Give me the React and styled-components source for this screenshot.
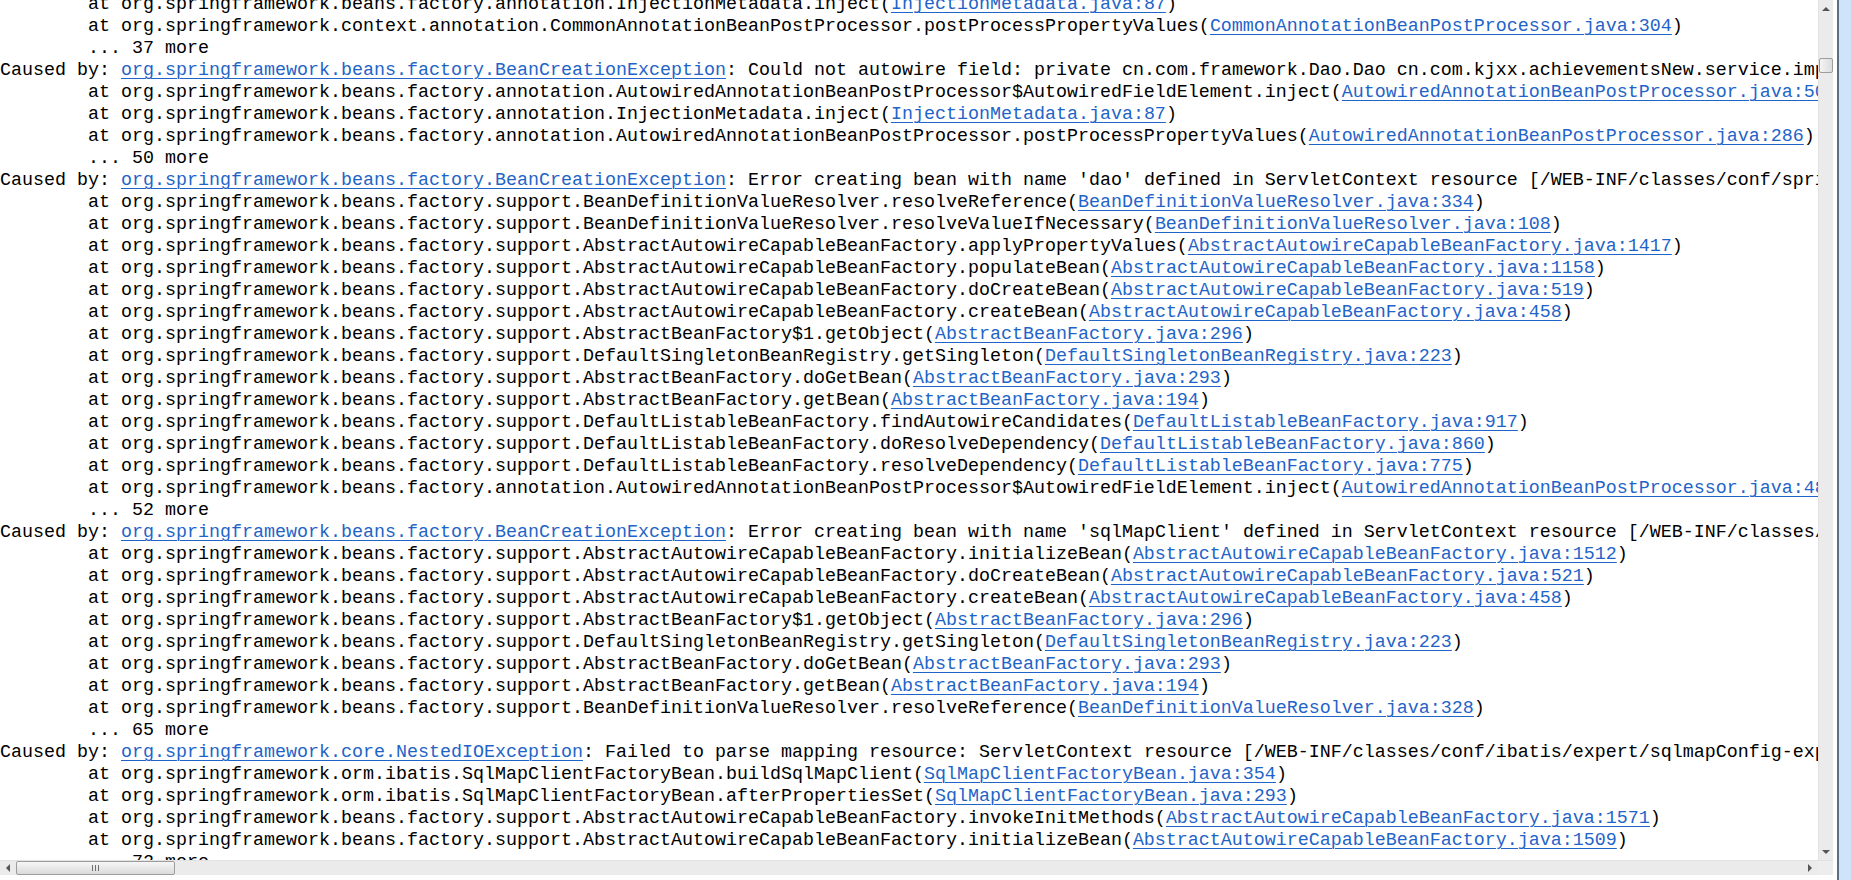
import React from 'react';
import styled, { createGlobalStyle, css } from 'styled-components';

const GlobalStyle = createGlobalStyle`
  html, body {
    margin: 0;
    padding: 0;
    background: #fff;
    overflow: hidden;
  }
`;

const Frame = styled.div`
  display: flex;
  width: 1851px;
  height: 880px;
  background: #fff;
`;

const ConsolePane = styled.div`
  display: flex;
  flex-direction: column;
  width: 1833px;
  padding-bottom: 5px;
  box-sizing: border-box;
`;

const Body = styled.div`
  display: flex;
  height: 860px;
`;

const Viewport = styled.div`
  flex: 1;
  overflow: hidden;
  background: #fff;
`;

const Output = styled.div`
  margin-top: -6px;
  font-family: "Liberation Mono", "Courier New", monospace;
  font-size: 18.33px;
  line-height: 22px;
  color: #000;
  white-space: pre;
  tab-size: 8;
`;

const Line = styled.div`
  height: 22px;
`;

const Link = styled.span`
  color: #1f64c8;
  text-decoration: underline;
  text-decoration-color: #1f64c8;
  text-decoration-thickness: 1px;
  text-underline-offset: 3px;
`;

const VScroll = styled.div`
  display: flex;
  flex-direction: column;
  width: 15px;
  background: #ebebeb;
  border-left: 1px solid #e2e2e2;
  box-sizing: border-box;
`;

const HScrollRow = styled.div`
  display: flex;
  height: 15px;
  background: #ebebeb;
  border-top: 1px solid #e2e2e2;
  box-sizing: border-box;
`;

const HScroll = styled.div`
  display: flex;
  flex: 1;
`;

const Corner = styled.div`
  width: 15px;
  background: #ededed;
`;

const Rail = styled.div`
  position: relative;
  flex: 1;
`;

const ArrowButton = styled.div`
  position: relative;
  flex: none;
  width: ${p => (p.$dir === 'up' || p.$dir === 'down' ? '14px' : '16px')};
  height: ${p => (p.$dir === 'up' || p.$dir === 'down' ? '17px' : '14px')};

  &::after {
    content: '';
    position: absolute;
    left: 50%;
    top: 50%;
    width: 0;
    height: 0;
    transform: translate(-50%, -50%);
    ${p => p.$dir === 'up' && css`
      border-left: 4px solid transparent;
      border-right: 4px solid transparent;
      border-bottom: 4px solid #555;
    `}
    ${p => p.$dir === 'down' && css`
      border-left: 4px solid transparent;
      border-right: 4px solid transparent;
      border-top: 4px solid #555;
    `}
    ${p => p.$dir === 'left' && css`
      border-top: 4px solid transparent;
      border-bottom: 4px solid transparent;
      border-right: 4px solid #555;
    `}
    ${p => p.$dir === 'right' && css`
      border-top: 4px solid transparent;
      border-bottom: 4px solid transparent;
      border-left: 4px solid #555;
    `}
  }
`;

const Thumb = styled.div`
  position: absolute;
  box-sizing: border-box;
  border: 1px solid #9d9d9d;
  border-radius: 2px;
  display: flex;
  align-items: center;
  justify-content: center;
  gap: 2px;
  ${p => p.$vertical ? css`
    left: 0;
    right: 0;
    background: linear-gradient(to right, #f4f4f4, #dcdcdc);
  ` : css`
    top: 0;
    bottom: 0;
    background: linear-gradient(to bottom, #f6f6f6, #dadada);
  `}
`;

const Grip = styled.span`
  width: 1px;
  height: 6px;
  background: #6f6f6f;
`;

const Gap = styled.div`
  width: 4px;
  background: #fff;
`;

const Edge = styled.div`
  width: 2px;
  background: #5f6d80;
`;

const SideStrip = styled.div`
  flex: 1;
  background: #cfe3fb;
`;

const P = 'org.springframework.';
const BF = P + 'beans.factory.';
const BCE = BF + 'BeanCreationException';
const AACBF = BF + 'support.AbstractAutowireCapableBeanFactory';

const at = (method, link) => ({ kind: 'at', method, link });
const more = n => ({ kind: 'more', n });
const cause = (cls, msg) => ({ kind: 'cause', cls, msg });

const trace = [
  at(BF + 'annotation.InjectionMetadata.inject', 'InjectionMetadata.java:87'),
  at(P + 'context.annotation.CommonAnnotationBeanPostProcessor.postProcessPropertyValues', 'CommonAnnotationBeanPostProcessor.java:304'),
  more(37),
  cause(BCE, 'Could not autowire field: private cn.com.framework.Dao.Dao cn.com.kjxx.achievementsNew.service.impl.AchievementsServiceImpl.dao; nested exception is ' + BCE),
  at(BF + 'annotation.AutowiredAnnotationBeanPostProcessor$AutowiredFieldElement.inject', 'AutowiredAnnotationBeanPostProcessor.java:506'),
  at(BF + 'annotation.InjectionMetadata.inject', 'InjectionMetadata.java:87'),
  at(BF + 'annotation.AutowiredAnnotationBeanPostProcessor.postProcessPropertyValues', 'AutowiredAnnotationBeanPostProcessor.java:286'),
  more(50),
  cause(BCE, "Error creating bean with name 'dao' defined in ServletContext resource [/WEB-INF/classes/conf/spring/applicationContext-dao.xml]: Cannot resolve reference to bean 'sqlMapClient' while setting bean property 'sqlMapClient'"),
  at(BF + 'support.BeanDefinitionValueResolver.resolveReference', 'BeanDefinitionValueResolver.java:334'),
  at(BF + 'support.BeanDefinitionValueResolver.resolveValueIfNecessary', 'BeanDefinitionValueResolver.java:108'),
  at(AACBF + '.applyPropertyValues', 'AbstractAutowireCapableBeanFactory.java:1417'),
  at(AACBF + '.populateBean', 'AbstractAutowireCapableBeanFactory.java:1158'),
  at(AACBF + '.doCreateBean', 'AbstractAutowireCapableBeanFactory.java:519'),
  at(AACBF + '.createBean', 'AbstractAutowireCapableBeanFactory.java:458'),
  at(BF + 'support.AbstractBeanFactory$1.getObject', 'AbstractBeanFactory.java:296'),
  at(BF + 'support.DefaultSingletonBeanRegistry.getSingleton', 'DefaultSingletonBeanRegistry.java:223'),
  at(BF + 'support.AbstractBeanFactory.doGetBean', 'AbstractBeanFactory.java:293'),
  at(BF + 'support.AbstractBeanFactory.getBean', 'AbstractBeanFactory.java:194'),
  at(BF + 'support.DefaultListableBeanFactory.findAutowireCandidates', 'DefaultListableBeanFactory.java:917'),
  at(BF + 'support.DefaultListableBeanFactory.doResolveDependency', 'DefaultListableBeanFactory.java:860'),
  at(BF + 'support.DefaultListableBeanFactory.resolveDependency', 'DefaultListableBeanFactory.java:775'),
  at(BF + 'annotation.AutowiredAnnotationBeanPostProcessor$AutowiredFieldElement.inject', 'AutowiredAnnotationBeanPostProcessor.java:486'),
  more(52),
  cause(BCE, "Error creating bean with name 'sqlMapClient' defined in ServletContext resource [/WEB-INF/classes/conf/spring/applicationContext-dao.xml]: Invocation of init method failed"),
  at(AACBF + '.initializeBean', 'AbstractAutowireCapableBeanFactory.java:1512'),
  at(AACBF + '.doCreateBean', 'AbstractAutowireCapableBeanFactory.java:521'),
  at(AACBF + '.createBean', 'AbstractAutowireCapableBeanFactory.java:458'),
  at(BF + 'support.AbstractBeanFactory$1.getObject', 'AbstractBeanFactory.java:296'),
  at(BF + 'support.DefaultSingletonBeanRegistry.getSingleton', 'DefaultSingletonBeanRegistry.java:223'),
  at(BF + 'support.AbstractBeanFactory.doGetBean', 'AbstractBeanFactory.java:293'),
  at(BF + 'support.AbstractBeanFactory.getBean', 'AbstractBeanFactory.java:194'),
  at(BF + 'support.BeanDefinitionValueResolver.resolveReference', 'BeanDefinitionValueResolver.java:328'),
  more(65),
  cause(P + 'core.NestedIOException', 'Failed to parse mapping resource: ServletContext resource [/WEB-INF/classes/conf/ibatis/expert/sqlmapConfig-expert.xml]'),
  at(P + 'orm.ibatis.SqlMapClientFactoryBean.buildSqlMapClient', 'SqlMapClientFactoryBean.java:354'),
  at(P + 'orm.ibatis.SqlMapClientFactoryBean.afterPropertiesSet', 'SqlMapClientFactoryBean.java:293'),
  at(AACBF + '.invokeInitMethods', 'AbstractAutowireCapableBeanFactory.java:1571'),
  at(AACBF + '.initializeBean', 'AbstractAutowireCapableBeanFactory.java:1509'),
  more(72),
  at(AACBF + '.doCreateBean', 'AbstractAutowireCapableBeanFactory.java:519'),
];

function TraceLine({ item }) {
  if (item.kind === 'more') return <Line>{'\t... ' + item.n + ' more'}</Line>;
  if (item.kind === 'cause') {
    return (
      <Line>
        Caused by: <Link>{item.cls}</Link>{': ' + item.msg}
      </Line>
    );
  }
  return (
    <Line>
      {'\tat ' + item.method + '('}<Link>{item.link}</Link>)
    </Line>
  );
}

function Grips() {
  return (
    <>
      <Grip /><Grip /><Grip />
    </>
  );
}

export default function App() {
  const vThumb = { top: 41, height: 15 };
  const hThumb = { left: 0, width: 159 };
  return (
    <>
      <GlobalStyle />
      <Frame>
        <ConsolePane>
          <Body>
            <Viewport>
              <Output>
                {trace.map((item, i) => <TraceLine key={i} item={item} />)}
              </Output>
            </Viewport>
            <VScroll>
              <ArrowButton $dir="up" />
              <Rail>
                <Thumb $vertical style={vThumb} />
              </Rail>
              <ArrowButton $dir="down" />
            </VScroll>
          </Body>
          <HScrollRow>
            <HScroll>
              <ArrowButton $dir="left" />
              <Rail>
                <Thumb style={hThumb}><Grips /></Thumb>
              </Rail>
              <ArrowButton $dir="right" />
            </HScroll>
            <Corner />
          </HScrollRow>
        </ConsolePane>
        <Gap />
        <Edge />
        <SideStrip />
      </Frame>
    </>
  );
}
